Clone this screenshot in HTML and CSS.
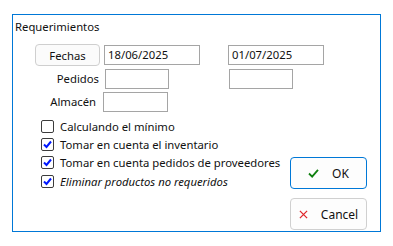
FILE: index.html
```html
<!DOCTYPE html>
<html lang="es">
<head>
    <meta charset="UTF-8">
    <title>Requerimientos</title>
    <link rel="stylesheet" href="styles.css">
</head>
<body>
    <div class="frame">
        <div class="title">Requerimientos</div>

        <div class="fields">
            <button class="btn-fechas">Fechas</button>
            <div class="input wide">18/06/2025</div>
            <div></div>
            <div class="input wide">01/07/2025</div>

            <div class="label">Pedidos</div>
            <div class="input short shift"></div>
            <div></div>
            <div class="input short shift"></div>

            <div class="label lbl-alm">Almacén</div>
            <div class="input short alm"></div>
            <div></div>
            <div></div>
        </div>

        <div class="bottom">
            <div class="checks">
                <div class="check"><span class="box"></span>Calculando el mínimo</div>
                <div class="check"><span class="box on"><svg viewBox="0 0 11 11"><path d="M2 5.5 L4.5 8 L9 2.5"/></svg></span>Tomar en cuenta el inventario</div>
                <div class="check"><span class="box on"><svg viewBox="0 0 11 11"><path d="M2 5.5 L4.5 8 L9 2.5"/></svg></span>Tomar en cuenta pedidos de proveedores</div>
                <div class="check it"><span class="box on"><svg viewBox="0 0 11 11"><path d="M2 5.5 L4.5 8 L9 2.5"/></svg></span>Eliminar productos no requeridos</div>
            </div>
            <div class="actions">
                <button class="act ok"><svg class="ico" viewBox="0 0 12 10"><path d="M1 5 L4.5 8.5 L11 1"/></svg>OK</button>
                <button class="act cancel"><svg class="ico" viewBox="0 0 10 10"><path d="M1 1 L9 9 M9 1 L1 9"/></svg>Cancel</button>
            </div>
        </div>
    </div>
</body>
</html>
```

FILE: styles.css
```css
body {
    margin: 0;
    background: #fff;
    font-family: "Noto Sans", "Open Sans", sans-serif;
    font-size: 11.3px;
    color: #111;
}

.frame {
    width: 367px;
    height: 216px;
    margin: 14px 0 0 12px;
    border: 1px solid #0078d7;
    padding: 0;
    display: flex;
    flex-direction: column;
}

.title {
    line-height: 16px;
    margin: 4px 0 0 2px;
}

.fields {
    display: grid;
    grid-template-columns: 65px 4px 96px 28px 96px;
    grid-template-rows: 22px 23px 23px;
    align-items: end;
    margin: 9px 0 0 22px;
}

.btn-fechas {
    height: 22px;
    margin: 0;
    padding: 0;
    font: inherit;
    color: inherit;
    background: #fbfbfb;
    border: 1px solid #cfcfcf;
    border-radius: 4px;
}

.fields .btn-fechas + .input {
    grid-column: 3;
}

.input {
    height: 20px;
    box-sizing: border-box;
    border: 1px solid #a5a5a5;
    padding-left: 3px;
    line-height: 18px;
    background: #fff;
}

.input.wide {
    align-self: center;
}

.fields > div:nth-child(4) {
    grid-column: 5;
}

.label {
    text-align: right;
    line-height: 20px;
    padding-right: 1px;
}

.label + .input {
    grid-column: 3;
}

.input.short {
    width: 64px;
}

.shift {
    margin-left: 1px;
}

.fields > div:nth-child(8) {
    grid-column: 5;
}

.lbl-alm {
    padding-right: 4px;
}

.alm {
    margin-left: -1px;
    width: 65px !important;
}

.bottom {
    display: flex;
    margin-top: 5px;
    flex: 1;
}

.checks {
    margin-left: 28px;
}

.check {
    display: flex;
    align-items: center;
    height: 18px;
    white-space: nowrap;
}

.check.it {
    font-style: italic;
    margin-top: 1px;
}

.box {
    width: 13px;
    height: 13px;
    box-sizing: border-box;
    border: 1px solid #3c3c3c;
    border-radius: 2px;
    margin-right: 6px;
    background: #fff;
    display: flex;
    align-items: center;
    justify-content: center;
}

.box svg {
    width: 11px;
    height: 11px;
}

.box path {
    fill: none;
    stroke: #0018ff;
    stroke-width: 2;
}

.actions {
    display: flex;
    flex-direction: column;
    flex-shrink: 0;
    gap: 9px;
    margin: 40px 13px -2px auto;
}

.act {
    width: 77px;
    height: 32px;
    margin: 0;
    padding: 0;
    font: inherit;
    font-size: 12px;
    color: inherit;
    background: #fdfdfd;
    border: 1px solid #d0d0d0;
    border-radius: 4px;
    display: flex;
    align-items: center;
    justify-content: center;
}

.act.ok {
    border-color: #0078d7;
}

.ico {
    margin-right: 13px;
}

.ok .ico {
    width: 11px;
    height: 9px;
}

.ok .ico path {
    fill: none;
    stroke: #108010;
    stroke-width: 2;
}

.cancel .ico {
    width: 9px;
    height: 9px;
}

.cancel .ico path {
    fill: none;
    stroke: #e0252a;
    stroke-width: 1.4;
}
```
